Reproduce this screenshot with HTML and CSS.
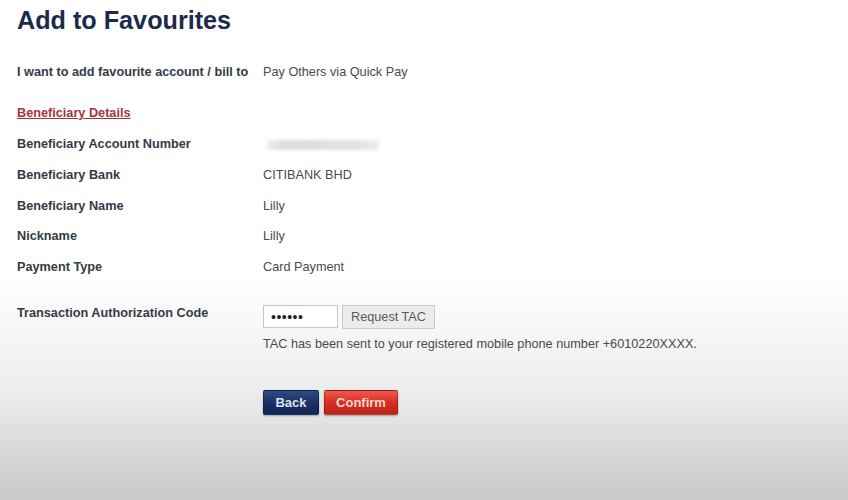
FILE: index.html
```html
<!DOCTYPE html>
<html lang="en">
<head>
    <meta charset="UTF-8">
    <title>Add to Favourites</title>
    <link rel="stylesheet" href="styles.css">
</head>
<body>
    <div class="page">
        <h1>Add to Favourites</h1>

        <div class="row intro">
            <div class="label">I want to add favourite account / bill to</div>
            <div class="value">Pay Others via Quick Pay</div>
        </div>

        <div class="section-link"><a href="#">Beneficiary Details</a></div>

        <div class="row">
            <div class="label">Beneficiary Account Number</div>
            <div class="value"><span class="masked"></span></div>
        </div>
        <div class="row">
            <div class="label">Beneficiary Bank</div>
            <div class="value">CITIBANK BHD</div>
        </div>
        <div class="row">
            <div class="label">Beneficiary Name</div>
            <div class="value">Lilly</div>
        </div>
        <div class="row">
            <div class="label">Nickname</div>
            <div class="value">Lilly</div>
        </div>
        <div class="row">
            <div class="label">Payment Type</div>
            <div class="value">Card Payment</div>
        </div>

        <div class="tac-row">
            <div class="label">Transaction Authorization Code</div>
            <div class="tac-field">
                <div class="tac-controls">
                    <input type="password" class="tac-input" value="123456">
                    <button class="btn-request">Request TAC</button>
                </div>
                <p class="tac-note">TAC has been sent to your registered mobile phone number +6010220XXXX.</p>
                <div class="actions">
                    <button class="btn btn-back">Back</button>
                    <button class="btn btn-confirm">Confirm</button>
                </div>
            </div>
        </div>
    </div>
</body>
</html>
```

FILE: styles.css
```css
html {
    height: 100%;
}
body {
    margin: 0;
    min-height: 100%;
    font-family: "Liberation Sans", Arial, sans-serif;
    font-size: 12.7px;
    color: #444;
    background: linear-gradient(to bottom, #ffffff 0%, #ffffff 56%, #ededed 78%, #c9c9c9 100%);
}
.page {
    padding: 0 17px;
    min-height: 500px;
    box-sizing: border-box;
}
h1 {
    margin: 6px 0 0;
    font-size: 25.2px;
    line-height: 28px;
    font-weight: bold;
    color: #1c2b4c;
}
.row {
    display: grid;
    grid-template-columns: 246px 1fr;
    line-height: 30.75px;
}
.intro {
    margin-top: 23px;
    line-height: 31px;
}
.label {
    font-weight: bold;
    color: #343a46;
}
.value {
    color: #4a4a4a;
}
.section-link {
    margin-top: 10px;
    line-height: 31px;
}
.section-link a {
    font-weight: bold;
    color: #a3343c;
    text-decoration: underline;
}
.masked {
    display: inline-block;
    vertical-align: middle;
    width: 112px;
    height: 10px;
    margin-left: 4px;
    background: linear-gradient(to right, #eeeeee, #dddddd 15%, #e2e2e2 80%, #eeeeee);
    filter: blur(1.5px);
}
.tac-row {
    display: grid;
    grid-template-columns: 246px 1fr;
    margin-top: 21px;
}
.tac-row .label {
    line-height: 18px;
}
.tac-controls {
    display: flex;
    align-items: center;
    gap: 4px;
    margin-top: 1px;
}
.tac-input {
    width: 75px;
    height: 23px;
    box-sizing: border-box;
    border: 1px solid #c6c6c6;
    padding: 0 7px;
    font-size: 14px;
    letter-spacing: 0.5px;
    color: #222;
    background: #fff;
}
.btn-request {
    width: 93px;
    height: 24px;
    border: 1px solid #cacaca;
    background: #ececec;
    color: #5a5a5a;
    font-family: "Liberation Sans", Arial, sans-serif;
    font-size: 12.7px;
    padding: 0;
}
.tac-note {
    margin: 6px 0 0;
    line-height: 18px;
    color: #4a4a4a;
}
.actions {
    display: flex;
    gap: 5px;
    margin-top: 37px;
}
.btn {
    height: 25px;
    border: 1px solid rgba(0, 0, 0, 0.25);
    border-radius: 2px;
    font-family: "Liberation Sans Narrow", "Liberation Sans", Arial, sans-serif;
    font-size: 13px;
    font-weight: bold;
    padding: 0;
    box-shadow: 0 1px 2px rgba(0, 0, 0, 0.3);
}
.btn-back {
    width: 56px;
    color: #dde4f0;
    background: linear-gradient(to bottom, #2c4b85, #182f62 55%, #122656);
}
.btn-confirm {
    width: 74px;
    color: #f8d8d0;
    background: linear-gradient(to bottom, #ef5a4a, #d62f22 50%, #c0231a);
}
```
